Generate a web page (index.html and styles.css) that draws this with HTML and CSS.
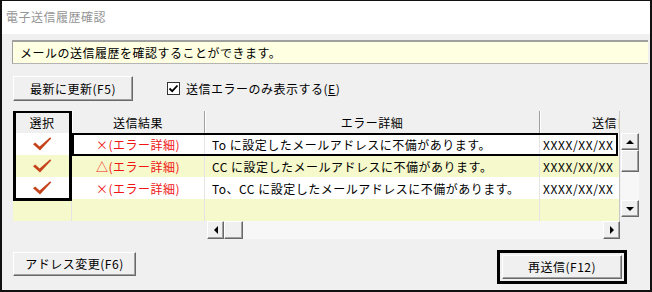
FILE: index.html
```html
<!DOCTYPE html>
<html lang="ja">
  <head>
    <meta charset="UTF-8">
    <title>電子送信履歴確認</title>
    <link rel="stylesheet" href="styles.css">
  </head>
  <body>
    <div class="window">
      <div class="titlebar">電子送信履歴確認</div>
      <div class="content">
        <div class="info">メールの送信履歴を確認することができます。</div>

        <div class="toolbar">
          <button class="btn btn-refresh">最新に更新(F5)</button>
          <label class="check">
            <span class="box">
              <svg width="11" height="11" viewBox="0 0 11 11"><path d="M1.5 5.5 L4.2 8.2 L9.5 2.5" fill="none" stroke="#000" stroke-width="1.8"/></svg>
            </span>
            <span>送信エラーのみ表示する(<u>E</u>)</span>
          </label>
        </div>

        <div class="grid-area">
          <div class="grid">
            <div class="row head">
              <div class="cell">選択</div>
              <div class="cell">送信結果</div>
              <div class="cell">エラー詳細</div>
              <div class="cell clip"><span class="wide">送信日時</span></div>
            </div>
            <div class="row">
              <div class="cell mark"><svg class="tick" width="20" height="16" viewBox="0 0 20 16"><path d="M1 8.2 L3.2 6.6 L7.6 10.6 L18.2 1.2 L19.2 2.4 L8 14.6 Z"/></svg></div>
              <div class="cell err">×(エラー詳細)</div>
              <div class="cell text">To に設定したメールアドレスに不備があります。</div>
              <div class="cell date">XXXX/XX/XX</div>
            </div>
            <div class="row alt">
              <div class="cell mark"><svg class="tick" width="20" height="16" viewBox="0 0 20 16"><path d="M1 8.2 L3.2 6.6 L7.6 10.6 L18.2 1.2 L19.2 2.4 L8 14.6 Z"/></svg></div>
              <div class="cell err">△(エラー詳細)</div>
              <div class="cell text">CC に設定したメールアドレスに不備があります。</div>
              <div class="cell date">XXXX/XX/XX</div>
            </div>
            <div class="row">
              <div class="cell mark"><svg class="tick" width="20" height="16" viewBox="0 0 20 16"><path d="M1 8.2 L3.2 6.6 L7.6 10.6 L18.2 1.2 L19.2 2.4 L8 14.6 Z"/></svg></div>
              <div class="cell err">×(エラー詳細)</div>
              <div class="cell text">To、CC に設定したメールアドレスに不備があります。</div>
              <div class="cell date">XXXX/XX/XX</div>
            </div>
            <div class="row alt">
              <div class="cell"></div>
              <div class="cell"></div>
              <div class="cell"></div>
              <div class="cell"></div>
            </div>
            <!-- highlight frames drawn over the grid -->
            <div class="frame frame-col"></div>
            <div class="frame frame-row"></div>
          </div>

          <div class="vscroll">
            <span class="sbtn"><i class="arrow up"></i></span>
            <span class="thumb"></span>
            <span class="trough"></span>
            <span class="sbtn"><i class="arrow down"></i></span>
          </div>
        </div>

        <div class="hscroll">
          <span class="sbtn"><i class="arrow left"></i></span>
          <span class="thumb"></span>
          <span class="trough"></span>
          <span class="sbtn"><i class="arrow right"></i></span>
        </div>

        <div class="footer">
          <button class="btn btn-address">アドレス変更(F6)</button>
          <div class="default-frame">
            <button class="btn btn-resend">再送信(F12)</button>
          </div>
        </div>
      </div>
    </div>
  </body>
</html>
```

FILE: styles.css
```css
:root {
  --font-ui: "Noto Sans CJK JP", "Noto Sans", sans-serif;
  --color-face: #f0f0f0;
  --color-shadow: #a0a0a0;
  --color-dark: #696969;
  --color-alt: #f5f9cb;
  --color-err: #f01414;
}

* {
  box-sizing: border-box;
}

body {
  margin: 0;
  font-family: var(--font-ui);
  font-size: 12px;
  letter-spacing: 0.5px;
  color: #000;
}

.window {
  width: 652px;
  height: 292px;
  border: 2px solid #111;
  border-top-width: 1px;
  background-color: var(--color-face);
  overflow: hidden;
}

.titlebar {
  height: 33px;
  background-color: #fff;
  color: #959595;
  line-height: 32px;
  padding-left: 4px;
}

.content {
  padding-left: 11px;
}

.info {
  margin-top: 6px;
  margin-right: 2px;
  margin-left: -1px;
  height: 24px;
  line-height: 21px;
  padding-left: 7px;
  background-color: #ffffe1;
  border-top: 2px solid #a0a0a0;
  border-bottom: 1px solid #b4b4b4;
  border-left: 1px solid #a0a0a0;
}

.toolbar {
  display: flex;
  align-items: center;
  margin-top: 12px;
  gap: 34px;
}

.btn {
  font-family: var(--font-ui);
  font-size: 12px;
  letter-spacing: 0.5px;
  background-color: var(--color-face);
  color: #000;
  border: 1px solid;
  border-color: #fff var(--color-dark) var(--color-dark) #fff;
  box-shadow: inset -1px -1px 0 var(--color-shadow);
  padding: 0;
  line-height: 1;
}

.btn-refresh {
  width: 120px;
  height: 25px;
}

.check {
  display: flex;
  align-items: center;
  gap: 6px;
}

.box {
  width: 13px;
  height: 13px;
  border: 1px solid #333;
  background-color: #fff;
  display: flex;
  align-items: center;
  justify-content: center;
}

.box svg {
  display: block;
}

.grid-area {
  display: flex;
  margin-top: 10px;
}

.grid {
  position: relative;
  width: 607px;
  overflow: hidden;
  border-right: 1px solid #c8c8c8;
}

.row {
  display: grid;
  grid-template-columns: 59px 133px 335px 80px;
  height: 22px;
  background-color: #fff;
}

.row.alt {
  background-color: var(--color-alt);
}

.row.head {
  background-color: var(--color-face);
}

.cell {
  display: flex;
  align-items: center;
  justify-content: center;
  white-space: nowrap;
  overflow: hidden;
  border-right: 1px solid #e4e4e4;
}

.head .cell {
  border-right: 1px solid var(--color-shadow);
  box-shadow: inset 1px 0 0 #fff;
  padding-top: 1px;
}

.clip {
  justify-content: flex-start;
}

.wide {
  flex: 0 0 154px;
  text-align: center;
}

.tick {
  fill: #c6441c;
}

.err {
  color: var(--color-err);
}

.text {
  justify-content: flex-start;
  padding-left: 7px;
}

.date {
  justify-content: flex-start;
  padding-left: 3px;
  letter-spacing: 0.6px;
}

.frame {
  position: absolute;
  border: 3px solid #000;
}

.frame-col {
  top: -1px;
  left: 0;
  width: 59px;
  height: 91px;
}

.frame-row {
  top: 22px;
  left: 59px;
  width: 546px;
  height: 23px;
  border-width: 2px;
}

.vscroll {
  display: flex;
  flex-direction: column;
  width: 18px;
  margin-top: 22px;
  height: 84px;
  margin-left: 1px;
}

.sbtn,
.thumb {
  display: flex;
  align-items: center;
  justify-content: center;
  flex: 0 0 17px;
  background-color: var(--color-face);
  border: 1px solid;
  border-color: #fff var(--color-dark) var(--color-dark) #fff;
  box-shadow: inset -1px -1px 0 var(--color-shadow);
}

.vscroll .thumb {
  flex-basis: 22px;
}

.trough {
  flex: 1;
  background-color: #f7f7f7;
}

.arrow {
  width: 0;
  height: 0;
  border: 4px solid transparent;
}

.arrow.up {
  border-bottom-color: #000;
  border-top-width: 0;
}

.arrow.down {
  border-top-color: #000;
  border-bottom-width: 0;
}

.arrow.left {
  border-right-color: #000;
  border-left-width: 0;
}

.arrow.right {
  border-left-color: #000;
  border-right-width: 0;
}

.hscroll {
  display: flex;
  width: 413px;
  height: 18px;
  margin-left: 194px;
}

.hscroll .sbtn,
.hscroll .thumb {
  flex: 0 0 17px;
}

.hscroll .thumb {
  flex-basis: 19px;
}

.footer {
  display: flex;
  justify-content: space-between;
  align-items: flex-start;
  margin-top: 12px;
  padding-right: 23px;
}

.btn-address {
  width: 123px;
  height: 24px;
  margin-top: 1px;
}

.default-frame {
  border: 3px solid #000;
  padding: 2px;
  margin-top: -1px;
}

.btn-resend {
  width: 120px;
  height: 24px;
  display: block;
}
```
